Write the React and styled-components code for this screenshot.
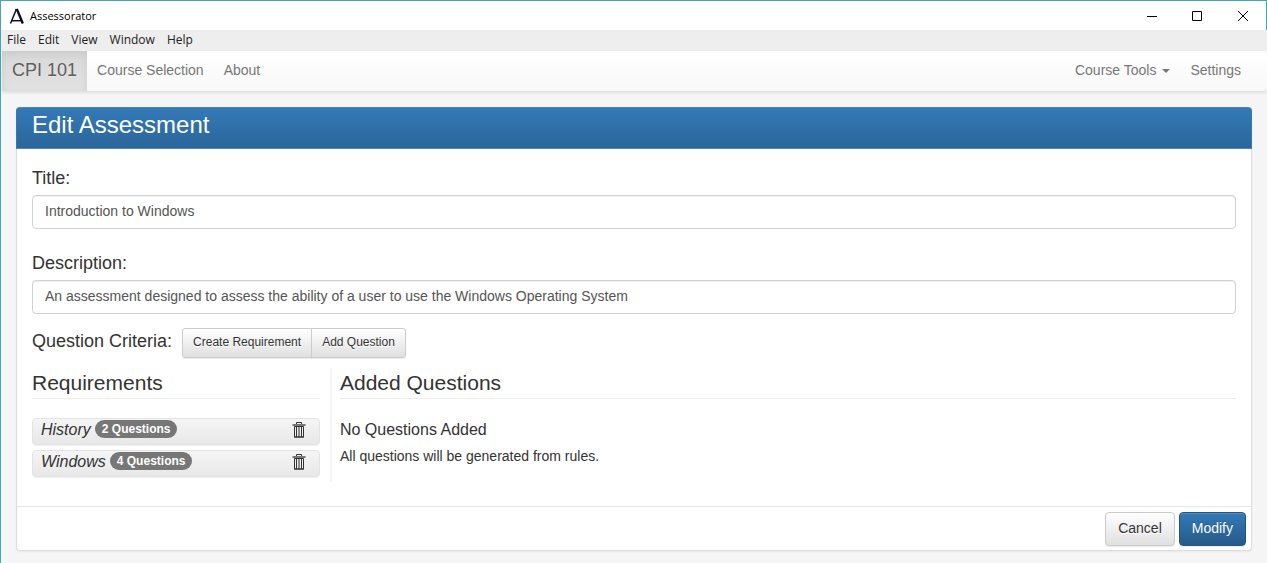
import React from "react";
import styled, { createGlobalStyle, css } from "styled-components";

const GlobalStyle = createGlobalStyle`
  *, *::before, *::after { box-sizing: border-box; }
  html, body { margin: 0; }
  body {
    background: #f5f5f5;
    color: #333;
    font-family: "Liberation Sans", Arial, sans-serif;
    font-size: 14px;
    line-height: 20px;
  }
  h1, h2, h3, p, ul { margin: 0; padding: 0; font-weight: 400; }
  button, input { font-family: inherit; }
`;

const Window = styled.div`
  min-height: 100vh;
  border-top: 1px solid #46a3b9;
  border-left: 1px solid #46a3b9;
`;

const TitleBar = styled.header`
  display: flex;
  align-items: center;
  height: 29px;
  padding-left: 8px;
  background: #fff;
  border-right: 1px solid #46a3b9;
  color: #000;
  font: 11px/20px "Open Sans", "Noto Sans", sans-serif;
`;

const AppName = styled.span`
  flex: 1;
  padding-left: 5px;
`;

const WindowButton = styled.button`
  display: flex;
  align-items: center;
  justify-content: center;
  width: 46px;
  height: 29px;
  padding: 0;
  border: 0;
  background: none;
`;

const MenuBar = styled.nav`
  display: flex;
  gap: 12px;
  height: 21px;
  padding-left: 6px;
  background: #eee;
  font: 12px/18px "Open Sans", "Noto Sans", sans-serif;
`;

const MenuItem = styled.button`
  height: 19px;
  padding: 0;
  border: 0;
  background: none;
  color: #222;
  font: inherit;
`;

const NavBar = styled.nav`
  display: flex;
  height: 40px;
  margin-left: 1px;
  padding-right: 16px;
  border-radius: 0 4px 4px 0;
  background: linear-gradient(#fff, #f8f8f8);
  box-shadow: 0 2px 3px rgba(0, 0, 0, 0.09);
`;

const NavLink = styled.a`
  display: flex;
  align-items: center;
  gap: 6px;
  padding: 0 10px 2px;
  color: #777;
  font-size: 14px;
  text-decoration: none;
  text-shadow: 0 1px 0 rgba(255, 255, 255, 0.25);
  ${(p) =>
    p.$brand &&
    css`
      color: #5e5e5e;
      font-size: 18px;
      background: linear-gradient(#d9d9d9, #e2e2e2);
      box-shadow: inset 0 3px 9px rgba(0, 0, 0, 0.075);
    `}
`;

const NavGroup = styled.div`
  display: flex;
  margin-left: ${(p) => (p.$end ? "auto" : "0")};
`;

const Caret = styled.span`
  margin-top: 2px;
  border: 4px solid transparent;
  border-top-color: currentColor;
  border-bottom: 0;
`;

const Panel = styled.form`
  margin: 16px 15px 12px;
  border-radius: 4px;
  border: 1px solid #ddd;
  border-top: 0;
  background: #fff;
  box-shadow: 0 1px 2px rgba(0, 0, 0, 0.05);
`;

const PanelHeading = styled.h1`
  height: 42px;
  margin: 0 -1px;
  padding: 0 15px;
  border-radius: 4px 4px 0 0;
  border: 1px solid #337ab7;
  border-color: #4a86b8 #337ab7 #5187b5;
  background: linear-gradient(#337ab7, #2b669a);
  color: #fff;
  font-size: 24px;
  line-height: 34px;
`;

const PanelBody = styled.div`
  padding: 16px 15px 24px;
`;

const Field = styled.div`
  display: flex;
  flex-direction: column;
  gap: 4px;
  margin-bottom: ${(p) => p.$space}px;
`;

const labelText = css`
  font-size: 18px;
  line-height: 26px;
`;

const Label = styled.label`
  ${labelText}
`;

const TextInput = styled.input`
  width: 100%;
  height: 34px;
  padding: 0 12px 2px;
  border: 1px solid #d2d2d2;
  border-radius: 4px;
  background: #fff;
  box-shadow: inset 0 1px 1px rgba(0, 0, 0, 0.075);
  color: #555;
  font-size: 14px;
`;

const CriteriaRow = styled.div`
  display: flex;
  align-items: flex-start;
  gap: 10px;
  margin-bottom: 10px;
`;

const CriteriaLabel = styled.h2`
  ${labelText}
`;

const ButtonGroup = styled.div`
  display: flex;
  & > button { padding: 0 10px 2px; height: 30px; font-size: 12px; }
  & > button:first-child { border-radius: 3px 0 0 3px; }
  & > button:last-child { border-radius: 0 3px 3px 0; margin-left: -1px; }
`;

const Button = styled.button`
  height: 34px;
  padding: 0 12px 2px;
  border: 1px solid ${(p) => (p.$primary ? "#245580" : "#ccc")};
  border-radius: 4px;
  background: ${(p) =>
    p.$primary
      ? "linear-gradient(#337ab7, #265a88)"
      : "linear-gradient(#fff, #e0e0e0)"};
  box-shadow: inset 0 1px 0 rgba(255, 255, 255, 0.15), 0 1px 1px rgba(0, 0, 0, 0.075);
  color: ${(p) => (p.$primary ? "#fff" : "#333")};
  font-size: 14px;
  text-shadow: ${(p) => (p.$primary ? "0 -1px 0 rgba(0, 0, 0, 0.2)" : "0 1px 0 #fff")};
`;

const Columns = styled.div`
  display: grid;
  grid-template-columns: calc(24% - 1px) 1fr;
  column-gap: 10px;
`;

const Column = styled.section`
  padding-left: ${(p) => (p.$divided ? "8px" : "0")};
  border-left: ${(p) => (p.$divided ? "2px solid #f5f5f5" : "0")};
  min-height: 114px;
`;

const SectionTitle = styled.h2`
  height: 31px;
  margin-bottom: 19px;
  border-bottom: 1px solid #eee;
  font-size: 21px;
  line-height: 29px;
`;

const RequirementList = styled.ul`
  display: flex;
  flex-direction: column;
  gap: 5px;
  list-style: none;
`;

const Requirement = styled.li`
  display: flex;
  align-items: flex-start;
  gap: 4px;
  height: 27px;
  padding: 1px 13px 0 8px;
  border: 1px solid #e3e3e3;
  border-radius: 4px;
  background: linear-gradient(#f5f5f5, #e8e8e8);
  box-shadow: 0 1px 1px rgba(0, 0, 0, 0.06);
`;

const RequirementName = styled.em`
  font-size: 16px;
`;

const Badge = styled.span`
  height: 18px;
  padding: 0 7px;
  border-radius: 9px;
  background: #777;
  color: #fff;
  font-size: 12px;
  font-weight: 700;
  line-height: 18px;
`;

const IconButton = styled.button`
  display: flex;
  margin-left: auto;
  padding: 2px 0 0;
  border: 0;
  background: none;
  color: #333;
`;

const EmptyTitle = styled.h3`
  margin-bottom: 5px;
  font-size: 16px;
  line-height: 23px;
`;

const PanelFooter = styled.footer`
  display: flex;
  justify-content: flex-end;
  gap: 4px;
  padding: 5px 5px 4px;
  border-top: 1px solid #e5e5e5;
`;

const LogoIcon = () => (
  <svg width="16" height="16" viewBox="0 0 16 16" fill="none" stroke="#0d0d2b" aria-hidden="true">
    <path d="M1.5 15.5 7.3 1.5" strokeWidth="1.5" />
    <path d="M7.8 1 13.8 15.5" strokeWidth="2.4" />
    <path d="M3 12.7h9.5" strokeWidth="1.5" />
    <path d="M6.2 1.5h2.4" strokeWidth="1.2" />
  </svg>
);

const WindowIcon = ({ d }) => (
  <svg width="12" height="12" viewBox="0 0 12 12" fill="none" stroke="#000" aria-hidden="true">
    <path d={d} />
  </svg>
);

const TrashIcon = () => (
  <svg width="14" height="16" viewBox="0 0 14 16" fill="none" stroke="currentColor" aria-hidden="true">
    <path d="M4.5 2.5v-2h5v2" />
    <path d="M0.5 3h13" strokeWidth="2" stroke="#777" />
    <path d="M2.5 4.5v10.5h9V4.5zM2 15h10" />
    <path d="M4.5 5v10M7 5v10M9.5 5v10" />
  </svg>
);

const windowControls = [
  { name: "Minimize", d: "M2 6.5h10" },
  { name: "Maximize", d: "M1.5 1.5h9v9h-9z" },
  { name: "Close", d: "M1 1l10 10M11 1L1 11" },
];

const requirements = [
  { name: "History", count: 2 },
  { name: "Windows", count: 4 },
];

export default function App() {
  return (
    <Window>
      <GlobalStyle />
      <TitleBar>
        <LogoIcon />
        <AppName>Assessorator</AppName>
        {windowControls.map((c) => (
          <WindowButton key={c.name} type="button" aria-label={c.name}>
            <WindowIcon d={c.d} />
          </WindowButton>
        ))}
      </TitleBar>
      <MenuBar>
        {["File", "Edit", "View", "Window", "Help"].map((m) => (
          <MenuItem key={m} type="button">{m}</MenuItem>
        ))}
      </MenuBar>
      <NavBar>
        <NavGroup>
          <NavLink href="#course" $brand>CPI 101</NavLink>
          <NavLink href="#selection">Course Selection</NavLink>
          <NavLink href="#about">About</NavLink>
        </NavGroup>
        <NavGroup $end>
          <NavLink href="#tools">Course Tools <Caret /></NavLink>
          <NavLink href="#settings">Settings</NavLink>
        </NavGroup>
      </NavBar>
      <Panel onSubmit={(e) => e.preventDefault()}>
        <PanelHeading>Edit Assessment</PanelHeading>
        <PanelBody>
          <Field $space={21}>
            <Label htmlFor="title">Title:</Label>
            <TextInput id="title" defaultValue="Introduction to Windows" />
          </Field>
          <Field $space={14}>
            <Label htmlFor="description">Description:</Label>
            <TextInput
              id="description"
              defaultValue="An assessment designed to assess the ability of a user to use the Windows Operating System"
            />
          </Field>
          <CriteriaRow>
            <CriteriaLabel>Question Criteria:</CriteriaLabel>
            <ButtonGroup>
              <Button type="button">Create Requirement</Button>
              <Button type="button">Add Question</Button>
            </ButtonGroup>
          </CriteriaRow>
          <Columns>
            <Column>
              <SectionTitle>Requirements</SectionTitle>
              <RequirementList>
                {requirements.map((r) => (
                  <Requirement key={r.name}>
                    <RequirementName>{r.name}</RequirementName>
                    <Badge>{r.count} Questions</Badge>
                    <IconButton type="button" aria-label={`Delete ${r.name}`}>
                      <TrashIcon />
                    </IconButton>
                  </Requirement>
                ))}
              </RequirementList>
            </Column>
            <Column $divided>
              <SectionTitle>Added Questions</SectionTitle>
              <EmptyTitle>No Questions Added</EmptyTitle>
              <p>All questions will be generated from rules.</p>
            </Column>
          </Columns>
        </PanelBody>
        <PanelFooter>
          <Button type="button">Cancel</Button>
          <Button type="submit" $primary>Modify</Button>
        </PanelFooter>
      </Panel>
    </Window>
  );
}
